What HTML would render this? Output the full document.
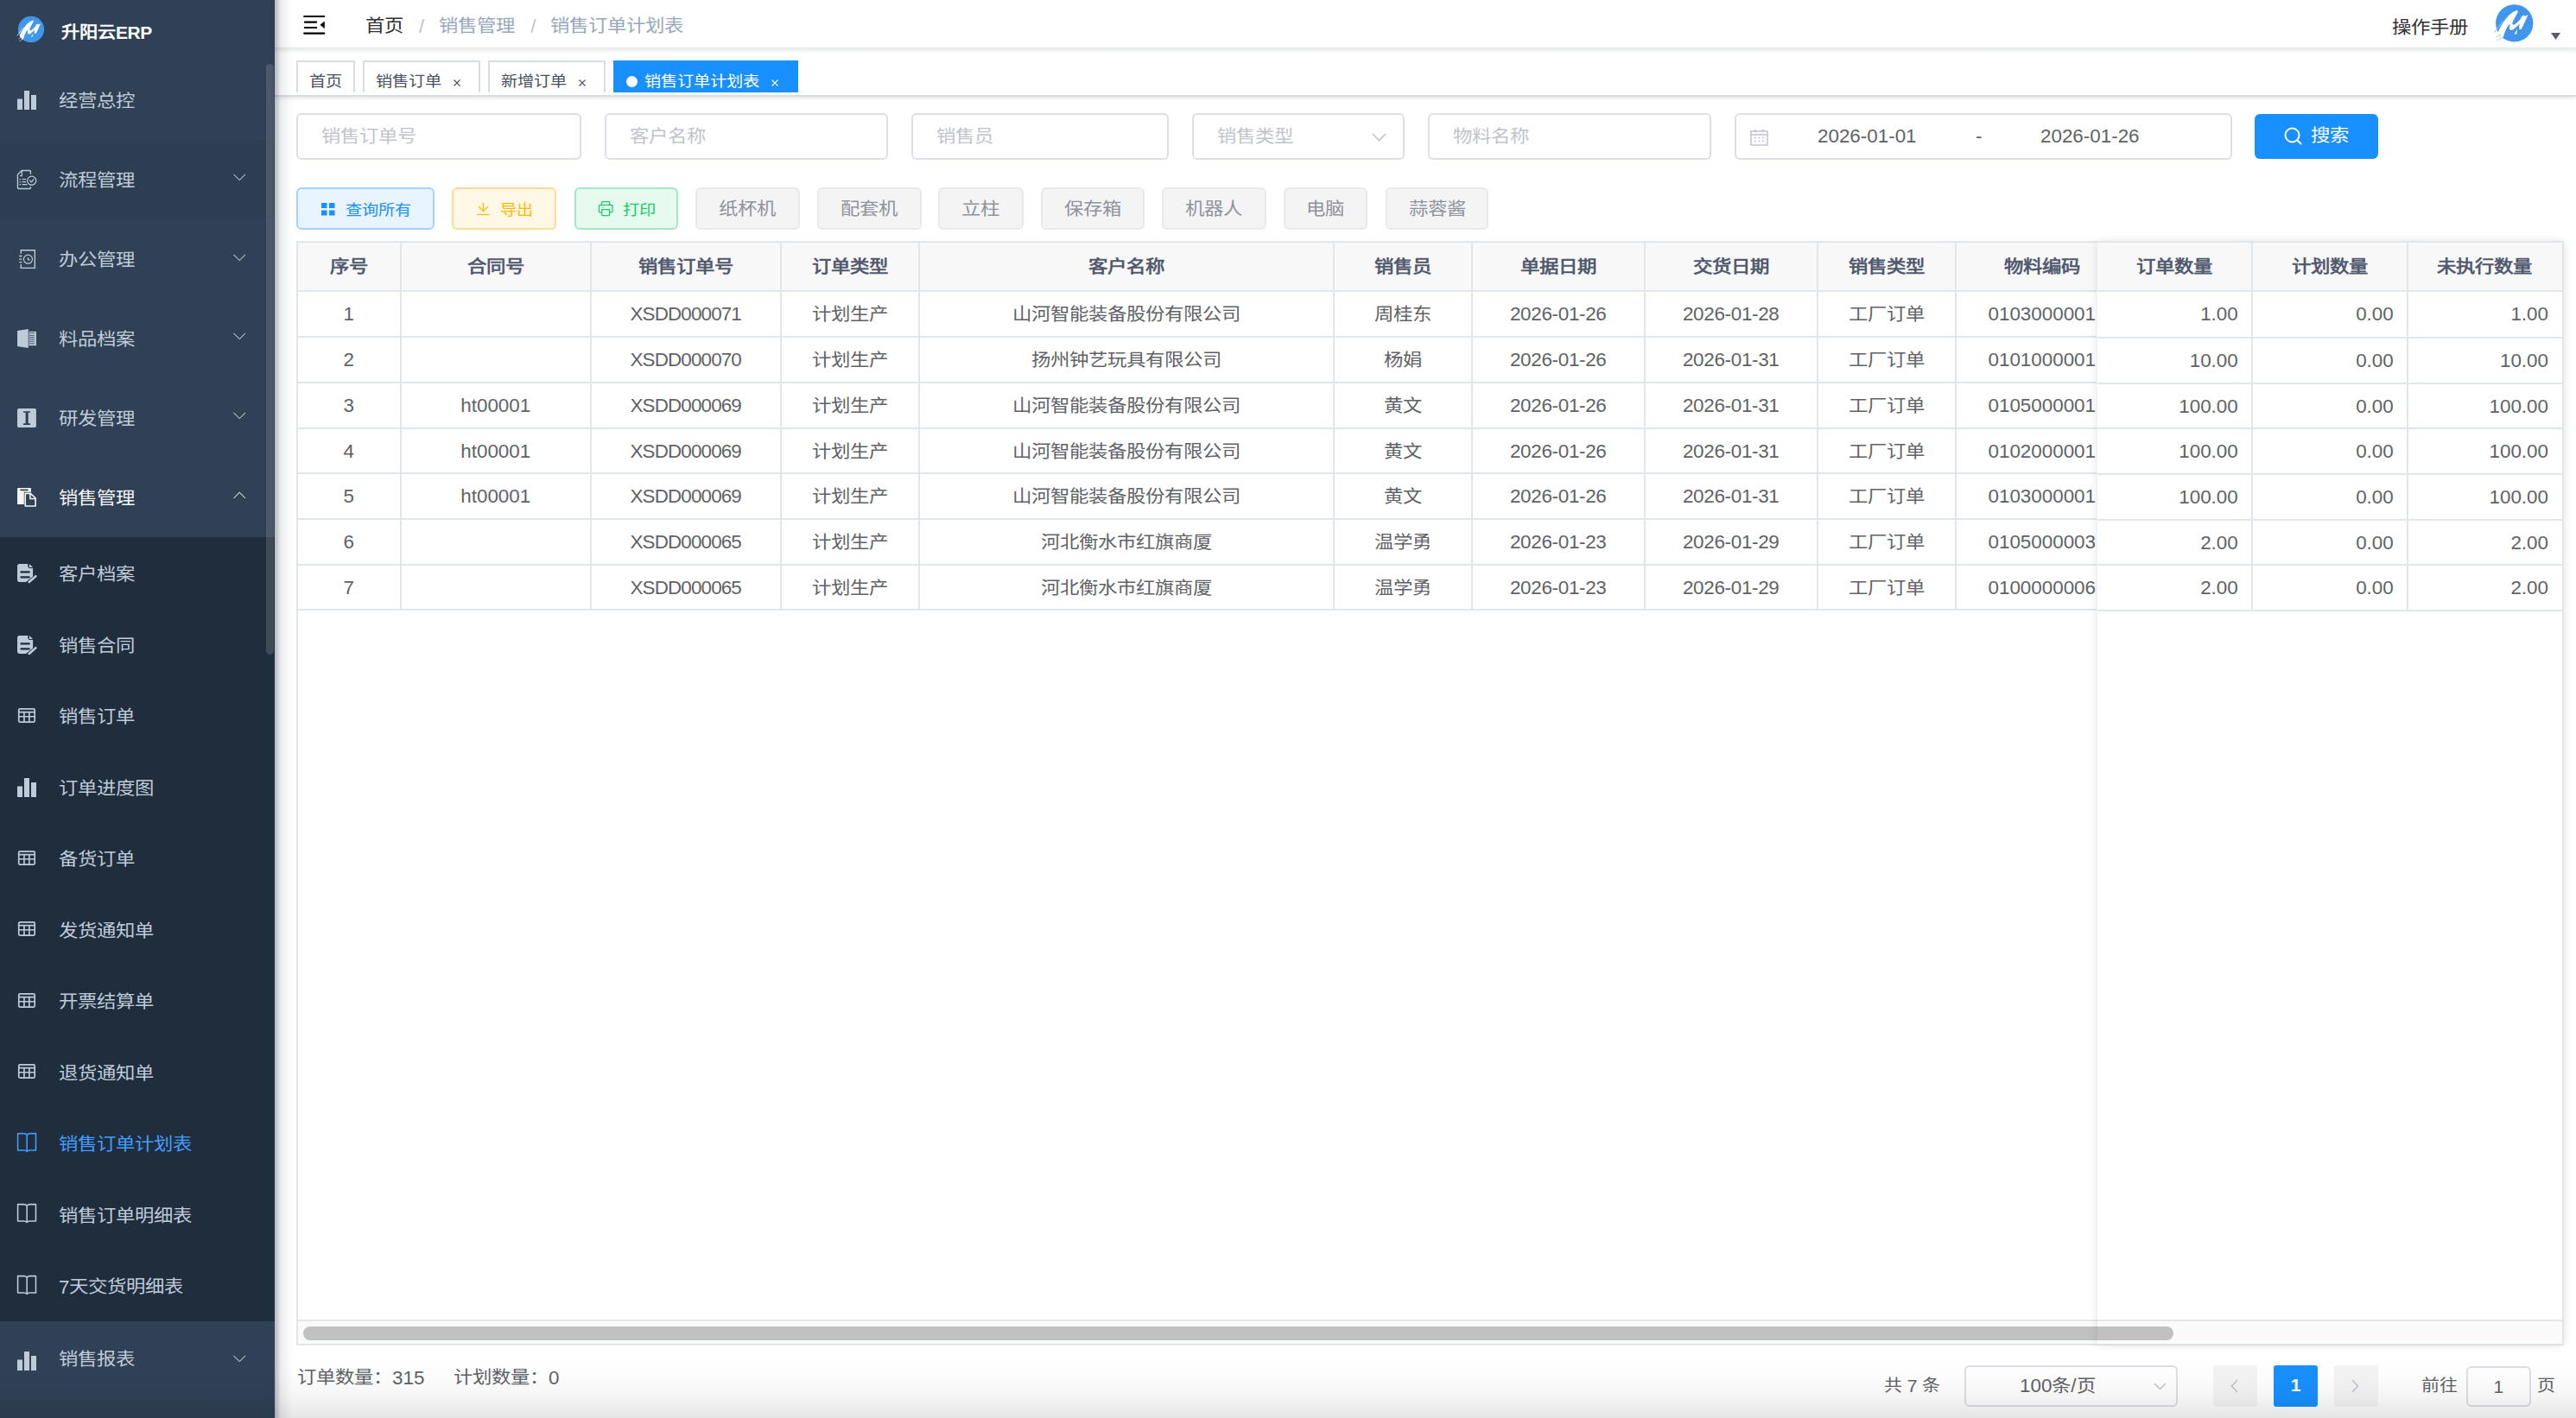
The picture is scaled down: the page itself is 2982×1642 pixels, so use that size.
<!DOCTYPE html>
<html lang="zh-CN"><head><meta charset="utf-8">
<style>
*{box-sizing:border-box;margin:0;padding:0}
html,body{width:2982px;height:1642px;overflow:hidden;background:#fff;font-family:"Liberation Sans",sans-serif;}
.abs{position:absolute}
#side{position:absolute;left:0;top:0;width:318px;height:1642px;background:#304156;overflow:hidden}
.mi{position:absolute;left:0;width:308px;color:#bfcbd9;font-size:22.4px;white-space:nowrap}
.mi .t{position:absolute;left:68px;top:0;line-height:var(--h);height:var(--h)}
.mi .ic{position:absolute;left:20px}
.mi .ch{position:absolute;left:270px;width:14px;height:14px}
#sub{position:absolute;left:0;top:622px;width:318px;height:907.5px;background:#1f2d3d}
#thumb{position:absolute;left:308px;top:74px;width:9px;height:684px;border-radius:5px;background:rgba(144,147,153,.3)}
#main{position:absolute;left:318px;top:0;width:2664px;height:1642px;background:#fff}
#shadow{position:absolute;left:318px;top:0;width:20px;height:1642px;background:linear-gradient(to right,rgba(0,21,41,.30),rgba(0,21,41,.08) 35%,rgba(0,21,41,0))}
#nav{position:absolute;left:318px;top:0;width:2664px;height:55px;background:#fff;box-shadow:0 2px 6px rgba(0,21,41,.12)}
#tags{position:absolute;left:318px;top:55px;width:2664px;height:57px;background:#fff;border-bottom:2px solid #d8dce5;box-shadow:0 2px 5px rgba(0,0,0,.10)}
.tab{position:absolute;top:70px;height:37px;border:2px solid #d8dce5;border-bottom:none;background:#fff}
.tt{position:absolute;top:78.5px;height:32px;line-height:32px;font-size:19.2px;color:#495060;white-space:nowrap}
.inp{position:absolute;top:131px;height:54px;border:2px solid #dcdfe6;border-radius:6px;background:#fff;color:#c0c4cc;font-size:22.4px;line-height:50px;padding-left:27px;white-space:nowrap}
.btn{position:absolute;top:217px;height:48.5px;border:2px solid;border-radius:6px;font-size:22.4px;line-height:45px;text-align:center;white-space:nowrap}
.bt{position:absolute;top:228px;height:32px;line-height:32px;font-size:19.2px;white-space:nowrap}
.gb{background:#f4f4f5;border-color:#e9e9eb;color:#909399}
#tbl{position:absolute;left:343px;top:279px;width:2625px;height:1279px;border:2px solid #dfe6ec;background:#fff;overflow:hidden}
.hd{position:absolute;top:0;height:58px;background:#f8f8f9;border-bottom:2px solid #dfe6ec}
.vl{position:absolute;width:2px;background:#dfe6ec}
.hl{position:absolute;height:2px;background:#dfe6ec}
.th{position:absolute;top:0;height:56px;line-height:56px;text-align:center;font-size:22.4px;font-weight:bold;color:#515a6e;white-space:nowrap}
.td{position:absolute;height:52px;line-height:52px;text-align:center;font-size:22.4px;color:#606266;white-space:nowrap;overflow:hidden}
.cj{display:inline-block;transform:translateY(var(--dy,0px)) scaleY(.9);transform-origin:50% 52%}
.td,.th,.inp,.gb{--dy:1px}
</style></head>
<body>
<div id="main"></div>

<!-- SIDEBAR -->
<div id="side">
  <div id="sub"></div><div class="abs" style="left:0;top:161.5px;width:318px;height:92px;background:rgba(0,0,0,.045)"></div>
  <!-- logo -->
  <svg class="abs" style="left:10px;top:10px" width="190" height="50" viewBox="0 0 2576 678"><g transform="translate(352,325) scale(0.367) translate(-792,-692)"><circle cx="792" cy="692" r="558" fill="#4096ea"/><path d="M300,960 C420,700 620,380 850,310 C900,300 905,360 880,390 C820,500 740,620 730,700 C730,760 790,740 840,700 C930,630 990,560 1010,490 L1070,450 L1110,480 L1200,440 C1120,620 1050,780 1000,870 L940,880 C920,800 940,740 950,700 C880,780 780,880 700,900 C630,900 640,820 660,700 C560,800 500,950 460,1110 L420,1130 L330,1030 Z M880,870 C840,930 800,980 800,1010 C810,1040 850,1030 860,990 Z" fill="#fff"/><path d="M200,960 L450,630" stroke="#fff" stroke-width="30" stroke-linecap="round" opacity="0.85"/><path d="M270,1090 L380,1030 M290,1200 L430,1110" stroke="#fff" stroke-width="26" stroke-linecap="round" opacity="0.8"/></g></svg>
  <div class="abs" style="left:71px;top:21.5px;font-size:21.3px;font-weight:bold;color:#fff;line-height:32px;white-space:nowrap"><span class="cj">升阳云</span><span style="font-size:21px;letter-spacing:-0.5px">ERP</span></div>
  <div id="thumb"></div>
  <div id="menu"><svg class="abs" style="left:20px;top:105px" width="23" height="23" viewBox="0 0 23 23"><rect x="0" y="9.5" width="6" height="12.5" fill="#bfcbd9"/><rect x="8" y="0" width="6" height="22" fill="#bfcbd9"/><rect x="16" y="5" width="6" height="17" fill="#bfcbd9"/></svg><div class="abs" style="left:68px;top:101.5px;height:32px;line-height:32px;font-size:22.4px;color:#bfcbd9;white-space:nowrap"><span class="cj">经营总控</span></div><svg class="abs" style="left:12px;top:190px" width="40" height="40" viewBox="0 0 1418 1418"><path d="M830,420 V300 Q830,265 795,265 H470 L300,430 V975 Q300,1010 335,1010 H795 Q830,1010 830,975 V930" stroke="#bfcbd9" stroke-width="48" fill="none"/><path d="M470,280 V480 H390" stroke="#bfcbd9" stroke-width="45" fill="none"/><path d="M375,625 H430 M480,625 H640 M375,730 H430 M480,730 H640 M375,840 H430 M480,840 H690" stroke="#bfcbd9" stroke-width="45" fill="none"/><circle cx="875" cy="680" r="180" stroke="#bfcbd9" stroke-width="45" fill="none"/><path d="M790,665 L865,740 L960,615" stroke="#bfcbd9" stroke-width="45" fill="none"/></svg><div class="abs" style="left:68px;top:193.5px;height:32px;line-height:32px;font-size:22.4px;color:#bfcbd9;white-space:nowrap"><span class="cj">流程管理</span></div><svg class="abs" style="left:269.5px;top:201px" width="15" height="9" viewBox="0 0 15 9"><path d="M0.5 0.8 L7.25 7.55 L14 0.8" stroke="#bfcbd9" stroke-width="1.05" fill="none" opacity=".9"/></svg><svg class="abs" style="left:12px;top:280.0px" width="40" height="40" viewBox="0 0 1418 1418"><path d="M435,490 V345 H1005 V1075 H435 V925" stroke="#bfcbd9" stroke-width="48" fill="none"/><path d="M360,585 H480 M360,715 H480 M360,835 H480" stroke="#bfcbd9" stroke-width="45"/><circle cx="725" cy="715" r="178" stroke="#bfcbd9" stroke-width="42" fill="none"/><path d="M725,640 V740 H805" stroke="#bfcbd9" stroke-width="42" fill="none"/></svg><div class="abs" style="left:68px;top:286.0px;height:32px;line-height:32px;font-size:22.4px;color:#bfcbd9;white-space:nowrap"><span class="cj">办公管理</span></div><svg class="abs" style="left:269.5px;top:293.5px" width="15" height="9" viewBox="0 0 15 9"><path d="M0.5 0.8 L7.25 7.55 L14 0.8" stroke="#bfcbd9" stroke-width="1.05" fill="none" opacity=".9"/></svg><svg class="abs" style="left:12px;top:372px" width="40" height="40" viewBox="0 0 1418 1418"><path d="M285,390 L735,320 L735,1100 L285,1030 Z" fill="#bfcbd9"/><rect x="760" y="420" width="300" height="580" fill="#bfcbd9"/><path d="M760,480 H990 M760,580 H990 M760,655 H990 M760,830 H990" stroke="#304156" stroke-width="28"/><path d="M760,740 H990 M760,910 H990" stroke="#6d7d92" stroke-width="55"/></svg><div class="abs" style="left:68px;top:377.5px;height:32px;line-height:32px;font-size:22.4px;color:#bfcbd9;white-space:nowrap"><span class="cj">料品档案</span></div><svg class="abs" style="left:269.5px;top:385px" width="15" height="9" viewBox="0 0 15 9"><path d="M0.5 0.8 L7.25 7.55 L14 0.8" stroke="#bfcbd9" stroke-width="1.05" fill="none" opacity=".9"/></svg><svg class="abs" style="left:12px;top:464px" width="40" height="40" viewBox="0 0 1418 1418"><rect x="285" y="320" width="775" height="780" rx="60" fill="#bfcbd9"/><path d="M535,430 H815 V490 H735 V930 H815 V990 H535 V930 H625 V490 H535 Z" fill="#304156"/></svg><div class="abs" style="left:68px;top:469.5px;height:32px;line-height:32px;font-size:22.4px;color:#bfcbd9;white-space:nowrap"><span class="cj">研发管理</span></div><svg class="abs" style="left:269.5px;top:477px" width="15" height="9" viewBox="0 0 15 9"><path d="M0.5 0.8 L7.25 7.55 L14 0.8" stroke="#bfcbd9" stroke-width="1.05" fill="none" opacity=".9"/></svg><svg class="abs" style="left:12px;top:556px" width="40" height="40" viewBox="0 0 1418 1418"><rect x="285" y="320" width="565" height="670" rx="15" fill="#f4f4f5"/><rect x="395" y="375" width="340" height="55" rx="27" fill="#304156"/><path d="M560,490 H860 L1090,700 V1110 H560 Z" fill="#304156"/><path d="M612,545 H825 L1032,735 V1062 H612 Z" stroke="#f4f4f5" stroke-width="58" fill="none" stroke-linejoin="round"/><path d="M812,560 V760 H1020" stroke="#f4f4f5" stroke-width="55" fill="none"/></svg><div class="abs" style="left:68px;top:561.5px;height:32px;line-height:32px;font-size:22.4px;color:#f4f4f5;white-space:nowrap"><span class="cj">销售管理</span></div><svg class="abs" style="left:269.5px;top:568.5px" width="15" height="9" viewBox="0 0 15 9"><path d="M0.5 8 L7.25 1.25 L14 8" stroke="#f4f4f5" stroke-width="1.05" fill="none" opacity=".9"/></svg><svg class="abs" style="left:12px;top:644.0px" width="40" height="40" viewBox="0 0 1418 1418"><path d="M370,320 H720 V400 Q720,500 820,500 H925 V830 L640,1060 H380 Q285,1060 285,965 V415 Q285,320 370,320 Z" fill="#bfcbd9"/><path d="M775,320 L925,460 H790 Q775,460 775,445 Z" fill="#bfcbd9"/><path d="M440,655 H770 M440,860 H770" stroke="#1f2d3d" stroke-width="80" stroke-linecap="round"/><path d="M650,1050 L560,1040" stroke="#1f2d3d" stroke-width="0"/><path d="M770,1060 L960,895" stroke="#bfcbd9" stroke-width="95" stroke-linecap="round"/><path d="M1010,850 L1040,825" stroke="#bfcbd9" stroke-width="95" stroke-linecap="round"/></svg><div class="abs" style="left:68px;top:650.0px;height:32px;line-height:32px;font-size:22.4px;color:#bfcbd9;white-space:nowrap"><span class="cj">客户档案</span></div><svg class="abs" style="left:12px;top:726.5px" width="40" height="40" viewBox="0 0 1418 1418"><path d="M370,320 H720 V400 Q720,500 820,500 H925 V830 L640,1060 H380 Q285,1060 285,965 V415 Q285,320 370,320 Z" fill="#bfcbd9"/><path d="M775,320 L925,460 H790 Q775,460 775,445 Z" fill="#bfcbd9"/><path d="M440,655 H770 M440,860 H770" stroke="#1f2d3d" stroke-width="80" stroke-linecap="round"/><path d="M650,1050 L560,1040" stroke="#1f2d3d" stroke-width="0"/><path d="M770,1060 L960,895" stroke="#bfcbd9" stroke-width="95" stroke-linecap="round"/><path d="M1010,850 L1040,825" stroke="#bfcbd9" stroke-width="95" stroke-linecap="round"/></svg><div class="abs" style="left:68px;top:732.5px;height:32px;line-height:32px;font-size:22.4px;color:#bfcbd9;white-space:nowrap"><span class="cj">销售合同</span></div><svg class="abs" style="left:12px;top:809.5px" width="40" height="40" viewBox="0 0 1418 1418"><rect x="345" y="385" width="655" height="540" rx="45" stroke="#bfcbd9" stroke-width="60" fill="none"/><path d="M345,520 H1000 M345,700 H1000 M565,520 V925 M775,520 V925" stroke="#bfcbd9" stroke-width="58"/></svg><div class="abs" style="left:68px;top:815.0px;height:32px;line-height:32px;font-size:22.4px;color:#bfcbd9;white-space:nowrap"><span class="cj">销售订单</span></div><svg class="abs" style="left:20px;top:901.0px" width="23" height="23" viewBox="0 0 23 23"><rect x="0" y="9.5" width="6" height="12.5" fill="#bfcbd9"/><rect x="8" y="0" width="6" height="22" fill="#bfcbd9"/><rect x="16" y="5" width="6" height="17" fill="#bfcbd9"/></svg><div class="abs" style="left:68px;top:897.5px;height:32px;line-height:32px;font-size:22.4px;color:#bfcbd9;white-space:nowrap"><span class="cj">订单进度图</span></div><svg class="abs" style="left:12px;top:974.5px" width="40" height="40" viewBox="0 0 1418 1418"><rect x="345" y="385" width="655" height="540" rx="45" stroke="#bfcbd9" stroke-width="60" fill="none"/><path d="M345,520 H1000 M345,700 H1000 M565,520 V925 M775,520 V925" stroke="#bfcbd9" stroke-width="58"/></svg><div class="abs" style="left:68px;top:980.0px;height:32px;line-height:32px;font-size:22.4px;color:#bfcbd9;white-space:nowrap"><span class="cj">备货订单</span></div><svg class="abs" style="left:12px;top:1057.0px" width="40" height="40" viewBox="0 0 1418 1418"><rect x="345" y="385" width="655" height="540" rx="45" stroke="#bfcbd9" stroke-width="60" fill="none"/><path d="M345,520 H1000 M345,700 H1000 M565,520 V925 M775,520 V925" stroke="#bfcbd9" stroke-width="58"/></svg><div class="abs" style="left:68px;top:1062.5px;height:32px;line-height:32px;font-size:22.4px;color:#bfcbd9;white-space:nowrap"><span class="cj">发货通知单</span></div><svg class="abs" style="left:12px;top:1139.5px" width="40" height="40" viewBox="0 0 1418 1418"><rect x="345" y="385" width="655" height="540" rx="45" stroke="#bfcbd9" stroke-width="60" fill="none"/><path d="M345,520 H1000 M345,700 H1000 M565,520 V925 M775,520 V925" stroke="#bfcbd9" stroke-width="58"/></svg><div class="abs" style="left:68px;top:1145.0px;height:32px;line-height:32px;font-size:22.4px;color:#bfcbd9;white-space:nowrap"><span class="cj">开票结算单</span></div><svg class="abs" style="left:12px;top:1222.0px" width="40" height="40" viewBox="0 0 1418 1418"><rect x="345" y="385" width="655" height="540" rx="45" stroke="#bfcbd9" stroke-width="60" fill="none"/><path d="M345,520 H1000 M345,700 H1000 M565,520 V925 M775,520 V925" stroke="#bfcbd9" stroke-width="58"/></svg><div class="abs" style="left:68px;top:1227.5px;height:32px;line-height:32px;font-size:22.4px;color:#bfcbd9;white-space:nowrap"><span class="cj">退货通知单</span></div><svg class="abs" style="left:12px;top:1304.5px" width="40" height="40" viewBox="0 0 1418 1418"><path d="M305,270 H560 Q640,270 680,330 Q720,270 800,270 H1045 V960 H790 Q720,960 680,1010 Q640,960 560,960 H305 Z" stroke="#409eff" stroke-width="55" fill="none" stroke-linejoin="round"/><path d="M680,330 V1000" stroke="#409eff" stroke-width="55"/></svg><div class="abs" style="left:68px;top:1310.0px;height:32px;line-height:32px;font-size:22.4px;color:#409eff;white-space:nowrap"><span class="cj">销售订单计划表</span></div><svg class="abs" style="left:12px;top:1387.0px" width="40" height="40" viewBox="0 0 1418 1418"><path d="M305,270 H560 Q640,270 680,330 Q720,270 800,270 H1045 V960 H790 Q720,960 680,1010 Q640,960 560,960 H305 Z" stroke="#bfcbd9" stroke-width="55" fill="none" stroke-linejoin="round"/><path d="M680,330 V1000" stroke="#bfcbd9" stroke-width="55"/></svg><div class="abs" style="left:68px;top:1392.5px;height:32px;line-height:32px;font-size:22.4px;color:#bfcbd9;white-space:nowrap"><span class="cj">销售订单明细表</span></div><svg class="abs" style="left:12px;top:1469.5px" width="40" height="40" viewBox="0 0 1418 1418"><path d="M305,270 H560 Q640,270 680,330 Q720,270 800,270 H1045 V960 H790 Q720,960 680,1010 Q640,960 560,960 H305 Z" stroke="#bfcbd9" stroke-width="55" fill="none" stroke-linejoin="round"/><path d="M680,330 V1000" stroke="#bfcbd9" stroke-width="55"/></svg><div class="abs" style="left:68px;top:1475.0px;height:32px;line-height:32px;font-size:22.4px;color:#bfcbd9;white-space:nowrap">7<span class="cj">天交货明细表</span></div><svg class="abs" style="left:20px;top:1565px" width="23" height="23" viewBox="0 0 23 23"><rect x="0" y="9.5" width="6" height="12.5" fill="#bfcbd9"/><rect x="8" y="0" width="6" height="22" fill="#bfcbd9"/><rect x="16" y="5" width="6" height="17" fill="#bfcbd9"/></svg><div class="abs" style="left:68px;top:1558.8px;height:32px;line-height:32px;font-size:22.4px;color:#bfcbd9;white-space:nowrap"><span class="cj">销售报表</span></div><svg class="abs" style="left:269.5px;top:1568.5px" width="15" height="9" viewBox="0 0 15 9"><path d="M0.5 0.8 L7.25 7.55 L14 0.8" stroke="#bfcbd9" stroke-width="1.05" fill="none" opacity=".9"/></svg></div>
</div>

<!-- NAVBAR -->
<div id="nav">
  <svg class="abs" style="left:27px;top:12px" width="40" height="34" viewBox="0 0 1668 1418"><path d="M300,292 H1262 M330,567 H882 M330,835 H882 M300,1110 H1262" stroke="#000" stroke-width="92" stroke-linecap="round"/><path d="M1278,540 L1075,700 L1278,865 Z" fill="#000" stroke="#000" stroke-width="20" stroke-linejoin="round"/></svg>
  <div class="abs" style="left:105px;top:15px;font-size:22.4px;line-height:32px;white-space:nowrap;color:#303133"><span class="cj">首页</span><span style="color:#c0c4cc;margin:0 17px 0 18px">/</span><span style="color:#97a8be"><span class="cj">销售管理</span></span><span style="color:#c0c4cc;margin:0 17px 0 18px">/</span><span style="color:#97a8be"><span class="cj">销售订单计划表</span></span></div>
  <div class="abs" style="left:2451px;top:17px;font-size:22.4px;line-height:32px;color:#303133;white-space:nowrap"><span class="cj">操作手册</span></div>
  <svg class="abs" style="left:2562px;top:0px" width="100" height="55" viewBox="0 0 2576 1417"><circle cx="792" cy="692" r="558" fill="#4096ea"/><path d="M300,960 C420,700 620,380 850,310 C900,300 905,360 880,390 C820,500 740,620 730,700 C730,760 790,740 840,700 C930,630 990,560 1010,490 L1070,450 L1110,480 L1200,440 C1120,620 1050,780 1000,870 L940,880 C920,800 940,740 950,700 C880,780 780,880 700,900 C630,900 640,820 660,700 C560,800 500,950 460,1110 L420,1130 L330,1030 Z M880,870 C840,930 800,980 800,1010 C810,1040 850,1030 860,990 Z" fill="#fff"/><path d="M200,960 L450,630" stroke="#8fc3f3" stroke-width="30" stroke-linecap="round" stroke-dasharray="40 25" opacity="0.9"/><path d="M270,1090 L380,1030 M290,1200 L430,1110" stroke="#8fc3f3" stroke-width="26" stroke-linecap="round" stroke-dasharray="30 30" opacity="0.9"/></svg>
  <svg class="abs" style="left:2635px;top:38px" width="12" height="9" viewBox="0 0 12 9"><path d="M0 0 L11 0 L5.5 8 Z" fill="#5a5e66"/></svg>
</div>

<!-- TAGS -->
<div id="tags"></div>
<div class="tab" style="left:343px;width:67.5px"></div>
<div class="tab" style="left:420px;width:135.5px"></div>
<div class="tab" style="left:565px;width:135.7px"></div>
<div class="tab" style="left:710px;width:214px;background:#1890ff;border-color:#1890ff"></div>
<div class="tt" style="left:358px"><span class="cj">首页</span></div>
<div class="tt" style="left:435px"><span class="cj">销售订单</span></div><svg class="abs" style="left:525px;top:92px" width="8" height="8" viewBox="0 0 8 8"><path d="M0.5 0.5 L7.5 7.5 M7.5 0.5 L0.5 7.5" stroke="#495060" stroke-width="1.1"/></svg>
<div class="tt" style="left:580px"><span class="cj">新增订单</span></div><svg class="abs" style="left:670px;top:92px" width="8" height="8" viewBox="0 0 8 8"><path d="M0.5 0.5 L7.5 7.5 M7.5 0.5 L0.5 7.5" stroke="#495060" stroke-width="1.1"/></svg>
<span class="abs" style="left:725px;top:87.5px;width:13px;height:13px;border-radius:50%;background:#fff"></span>
<div class="tt" style="left:745.5px;color:#fff"><span class="cj">销售订单计划表</span></div><svg class="abs" style="left:892.5px;top:92px" width="8" height="8" viewBox="0 0 8 8"><path d="M0.5 0.5 L7.5 7.5 M7.5 0.5 L0.5 7.5" stroke="#fff" stroke-width="1.1"/></svg>
<div id="content"><div class="inp" style="left:343px;width:329.5px"><span class="cj">销售订单号</span></div><div class="inp" style="left:699.5px;width:328.0px"><span class="cj">客户名称</span></div><div class="inp" style="left:1054.5px;width:298.75px"><span class="cj">销售员</span></div><div class="inp" style="left:1379.5px;width:246.75px"><span class="cj">销售类型</span></div><div class="inp" style="left:1652.5px;width:328.75px"><span class="cj">物料名称</span></div><svg class="abs" style="left:1588px;top:154px" width="17" height="10" viewBox="0 0 17 10"><path d="M1 1 L8.5 8.5 L16 1" stroke="#c0c4cc" stroke-width="1.6" fill="none"/></svg><div class="inp" style="left:2007.5px;width:576px;padding:0"></div><svg class="abs" style="left:2026px;top:149px" width="21" height="20" viewBox="0 0 21 20"><rect x="1" y="3" width="19" height="16" stroke="#c0c4cc" stroke-width="1.5" fill="none"/><path d="M1 7 H20 M6 0.5 V4 M15 0.5 V4" stroke="#c0c4cc" stroke-width="1.5"/><path d="M5 10.5 H7 M9.5 10.5 H11.5 M14 10.5 H16 M5 14.5 H7 M9.5 14.5 H11.5 M14 14.5 H16" stroke="#c0c4cc" stroke-width="1.3"/></svg><div class="abs" style="left:2104px;top:142px;font-size:22.4px;line-height:32px;color:#606266;white-space:nowrap">2026-01-01</div><div class="abs" style="left:2287px;top:142px;font-size:22.4px;line-height:32px;color:#606266">-</div><div class="abs" style="left:2362px;top:142px;font-size:22.4px;line-height:32px;color:#606266;white-space:nowrap">2026-01-26</div><div class="abs" style="left:2610px;top:132px;width:143px;height:52px;border-radius:6px;background:#1890ff"></div><svg class="abs" style="left:2644px;top:147px" width="22" height="22" viewBox="0 0 22 22"><circle cx="9.5" cy="9.5" r="8" stroke="#fff" stroke-width="2" fill="none"/><path d="M15.5 15.5 L19.5 19.5" stroke="#fff" stroke-width="2" stroke-linecap="round"/></svg><div class="abs" style="left:2675px;top:142px;font-size:22.4px;line-height:32px;color:#fff;white-space:nowrap"><span class="cj">搜索</span></div><div class="btn" style="left:343px;width:160px;background:#e8f4ff;border-color:#a3d3ff"></div><div class="bt" style="left:399.5px;color:#1890ff"><span class="cj">查询所有</span></div><svg class="abs" style="left:372px;top:235px" width="16" height="15" viewBox="0 0 16 15"><rect x="0" y="0" width="6.5" height="6" fill="#1890ff"/><rect x="9" y="0" width="6.5" height="6" fill="#1890ff"/><rect x="0" y="8.5" width="6.5" height="6" fill="#1890ff"/><rect x="9" y="8.5" width="6.5" height="6" fill="#1890ff"/></svg><div class="btn" style="left:523px;width:121px;background:#fff8e6;border-color:#ffdb93"></div><div class="bt" style="left:578.5px;color:#ffba00"><span class="cj">导出</span></div><svg class="abs" style="left:545px;top:228px" width="30" height="28" viewBox="0 0 1519 1418"><path d="M735,360 V820 M475,580 L735,840 L990,580 M395,1035 H1070" stroke="#ffba00" stroke-width="66" stroke-linecap="round" stroke-linejoin="round" fill="none"/></svg><div class="btn" style="left:664.5px;width:120px;background:#e7faf0;border-color:#a0e9c2"></div><div class="bt" style="left:720.5px;color:#13ce66"><span class="cj">打印</span></div><svg class="abs" style="left:686px;top:228px" width="30" height="28" viewBox="0 0 1519 1418"><g stroke="#13ce66" stroke-width="62" fill="none"><path d="M535,470 V330 Q535,290 575,290 H960 Q1000,290 1000,330 V470"/><path d="M525,910 H430 Q375,910 375,855 V535 Q375,480 430,480 H1110 Q1165,480 1165,535 V855 Q1165,910 1110,910 H1000"/><path d="M540,740 H990 V1050 Q990,1090 950,1090 H580 Q540,1090 540,1050 Z"/></g><path d="M520,610 H700" stroke="#13ce66" stroke-width="45" opacity=".45"/></svg><div class="btn gb" style="left:805px;width:120.5px"><span class="cj">纸杯机</span></div><div class="btn gb" style="left:945.5px;width:121.0px"><span class="cj">配套机</span></div><div class="btn gb" style="left:1086.25px;width:98.25px"><span class="cj">立柱</span></div><div class="btn gb" style="left:1204.5px;width:120.0px"><span class="cj">保存箱</span></div><div class="btn gb" style="left:1344.5px;width:121.0px"><span class="cj">机器人</span></div><div class="btn gb" style="left:1485.5px;width:97.75px"><span class="cj">电脑</span></div><div class="btn gb" style="left:1603.75px;width:119.5px"><span class="cj">蒜蓉酱</span></div><div class="abs" style="left:343px;top:279px;width:2625px;height:1279px;border:2px solid #dfe6ec;background:#fff"></div><div class="abs" style="left:345px;top:281px;width:2621px;height:56px;background:#f8f8f9"></div><div class="hl" style="left:345px;top:336px;width:2082px"></div><div class="hl" style="left:345px;top:389px;width:2082px"></div><div class="hl" style="left:345px;top:442px;width:2082px"></div><div class="hl" style="left:345px;top:494.5px;width:2082px"></div><div class="hl" style="left:345px;top:547px;width:2082px"></div><div class="hl" style="left:345px;top:600px;width:2082px"></div><div class="hl" style="left:345px;top:652.5px;width:2082px"></div><div class="hl" style="left:345px;top:705px;width:2082px"></div><div class="vl" style="left:462.75px;top:281px;height:426px"></div><div class="vl" style="left:682.75px;top:281px;height:426px"></div><div class="vl" style="left:902.75px;top:281px;height:426px"></div><div class="vl" style="left:1062.75px;top:281px;height:426px"></div><div class="vl" style="left:1542.75px;top:281px;height:426px"></div><div class="vl" style="left:1702.75px;top:281px;height:426px"></div><div class="vl" style="left:1902.75px;top:281px;height:426px"></div><div class="vl" style="left:2102.75px;top:281px;height:426px"></div><div class="vl" style="left:2262.75px;top:281px;height:426px"></div><div class="th" style="left:343.75px;width:120.0px;top:281px"><span class="cj">序号</span></div><div class="th" style="left:463.75px;width:220.0px;top:281px"><span class="cj">合同号</span></div><div class="th" style="left:683.75px;width:220.0px;top:281px"><span class="cj">销售订单号</span></div><div class="th" style="left:903.75px;width:160.0px;top:281px"><span class="cj">订单类型</span></div><div class="th" style="left:1063.75px;width:480.0px;top:281px"><span class="cj">客户名称</span></div><div class="th" style="left:1543.75px;width:160.0px;top:281px"><span class="cj">销售员</span></div><div class="th" style="left:1703.75px;width:200.0px;top:281px"><span class="cj">单据日期</span></div><div class="th" style="left:1903.75px;width:200.0px;top:281px"><span class="cj">交货日期</span></div><div class="th" style="left:2103.75px;width:160.0px;top:281px"><span class="cj">销售类型</span></div><div class="th" style="left:2263.75px;width:200.0px;top:281px"><span class="cj">物料编码</span></div><div class="td" style="left:343.75px;width:120.0px;top:338px;">1</div><div class="td" style="left:683.75px;width:220.0px;top:338px;letter-spacing:-0.85px;">XSDD000071</div><div class="td" style="left:903.75px;width:160.0px;top:338px;"><span class="cj">计划生产</span></div><div class="td" style="left:1063.75px;width:480.0px;top:338px;"><span class="cj">山河智能装备股份有限公司</span></div><div class="td" style="left:1543.75px;width:160.0px;top:338px;"><span class="cj">周桂东</span></div><div class="td" style="left:1703.75px;width:200.0px;top:338px;letter-spacing:-0.3px;">2026-01-26</div><div class="td" style="left:1903.75px;width:200.0px;top:338px;letter-spacing:-0.3px;">2026-01-28</div><div class="td" style="left:2103.75px;width:160.0px;top:338px;"><span class="cj">工厂订单</span></div><div class="td" style="left:2263.75px;width:200.0px;top:338px;">0103000001</div><div class="td" style="left:343.75px;width:120.0px;top:391px;">2</div><div class="td" style="left:683.75px;width:220.0px;top:391px;letter-spacing:-0.85px;">XSDD000070</div><div class="td" style="left:903.75px;width:160.0px;top:391px;"><span class="cj">计划生产</span></div><div class="td" style="left:1063.75px;width:480.0px;top:391px;"><span class="cj">扬州钟艺玩具有限公司</span></div><div class="td" style="left:1543.75px;width:160.0px;top:391px;"><span class="cj">杨娟</span></div><div class="td" style="left:1703.75px;width:200.0px;top:391px;letter-spacing:-0.3px;">2026-01-26</div><div class="td" style="left:1903.75px;width:200.0px;top:391px;letter-spacing:-0.3px;">2026-01-31</div><div class="td" style="left:2103.75px;width:160.0px;top:391px;"><span class="cj">工厂订单</span></div><div class="td" style="left:2263.75px;width:200.0px;top:391px;">0101000001</div><div class="td" style="left:343.75px;width:120.0px;top:444px;">3</div><div class="td" style="left:463.75px;width:220.0px;top:444px;">ht00001</div><div class="td" style="left:683.75px;width:220.0px;top:444px;letter-spacing:-0.85px;">XSDD000069</div><div class="td" style="left:903.75px;width:160.0px;top:444px;"><span class="cj">计划生产</span></div><div class="td" style="left:1063.75px;width:480.0px;top:444px;"><span class="cj">山河智能装备股份有限公司</span></div><div class="td" style="left:1543.75px;width:160.0px;top:444px;"><span class="cj">黄文</span></div><div class="td" style="left:1703.75px;width:200.0px;top:444px;letter-spacing:-0.3px;">2026-01-26</div><div class="td" style="left:1903.75px;width:200.0px;top:444px;letter-spacing:-0.3px;">2026-01-31</div><div class="td" style="left:2103.75px;width:160.0px;top:444px;"><span class="cj">工厂订单</span></div><div class="td" style="left:2263.75px;width:200.0px;top:444px;">0105000001</div><div class="td" style="left:343.75px;width:120.0px;top:496.5px;">4</div><div class="td" style="left:463.75px;width:220.0px;top:496.5px;">ht00001</div><div class="td" style="left:683.75px;width:220.0px;top:496.5px;letter-spacing:-0.85px;">XSDD000069</div><div class="td" style="left:903.75px;width:160.0px;top:496.5px;"><span class="cj">计划生产</span></div><div class="td" style="left:1063.75px;width:480.0px;top:496.5px;"><span class="cj">山河智能装备股份有限公司</span></div><div class="td" style="left:1543.75px;width:160.0px;top:496.5px;"><span class="cj">黄文</span></div><div class="td" style="left:1703.75px;width:200.0px;top:496.5px;letter-spacing:-0.3px;">2026-01-26</div><div class="td" style="left:1903.75px;width:200.0px;top:496.5px;letter-spacing:-0.3px;">2026-01-31</div><div class="td" style="left:2103.75px;width:160.0px;top:496.5px;"><span class="cj">工厂订单</span></div><div class="td" style="left:2263.75px;width:200.0px;top:496.5px;">0102000001</div><div class="td" style="left:343.75px;width:120.0px;top:549px;">5</div><div class="td" style="left:463.75px;width:220.0px;top:549px;">ht00001</div><div class="td" style="left:683.75px;width:220.0px;top:549px;letter-spacing:-0.85px;">XSDD000069</div><div class="td" style="left:903.75px;width:160.0px;top:549px;"><span class="cj">计划生产</span></div><div class="td" style="left:1063.75px;width:480.0px;top:549px;"><span class="cj">山河智能装备股份有限公司</span></div><div class="td" style="left:1543.75px;width:160.0px;top:549px;"><span class="cj">黄文</span></div><div class="td" style="left:1703.75px;width:200.0px;top:549px;letter-spacing:-0.3px;">2026-01-26</div><div class="td" style="left:1903.75px;width:200.0px;top:549px;letter-spacing:-0.3px;">2026-01-31</div><div class="td" style="left:2103.75px;width:160.0px;top:549px;"><span class="cj">工厂订单</span></div><div class="td" style="left:2263.75px;width:200.0px;top:549px;">0103000001</div><div class="td" style="left:343.75px;width:120.0px;top:602px;">6</div><div class="td" style="left:683.75px;width:220.0px;top:602px;letter-spacing:-0.85px;">XSDD000065</div><div class="td" style="left:903.75px;width:160.0px;top:602px;"><span class="cj">计划生产</span></div><div class="td" style="left:1063.75px;width:480.0px;top:602px;"><span class="cj">河北衡水市红旗商厦</span></div><div class="td" style="left:1543.75px;width:160.0px;top:602px;"><span class="cj">温学勇</span></div><div class="td" style="left:1703.75px;width:200.0px;top:602px;letter-spacing:-0.3px;">2026-01-23</div><div class="td" style="left:1903.75px;width:200.0px;top:602px;letter-spacing:-0.3px;">2026-01-29</div><div class="td" style="left:2103.75px;width:160.0px;top:602px;"><span class="cj">工厂订单</span></div><div class="td" style="left:2263.75px;width:200.0px;top:602px;">0105000003</div><div class="td" style="left:343.75px;width:120.0px;top:654.5px;">7</div><div class="td" style="left:683.75px;width:220.0px;top:654.5px;letter-spacing:-0.85px;">XSDD000065</div><div class="td" style="left:903.75px;width:160.0px;top:654.5px;"><span class="cj">计划生产</span></div><div class="td" style="left:1063.75px;width:480.0px;top:654.5px;"><span class="cj">河北衡水市红旗商厦</span></div><div class="td" style="left:1543.75px;width:160.0px;top:654.5px;"><span class="cj">温学勇</span></div><div class="td" style="left:1703.75px;width:200.0px;top:654.5px;letter-spacing:-0.3px;">2026-01-23</div><div class="td" style="left:1903.75px;width:200.0px;top:654.5px;letter-spacing:-0.3px;">2026-01-29</div><div class="td" style="left:2103.75px;width:160.0px;top:654.5px;"><span class="cj">工厂订单</span></div><div class="td" style="left:2263.75px;width:200.0px;top:654.5px;">0100000006</div><div class="abs" style="left:345px;top:1528px;width:2621px;height:28px;background:#fafafa;border-top:2px solid #e6e6e6"></div><div class="abs" style="left:351px;top:1536px;width:2165px;height:16px;border-radius:8px;background:#c1c1c1"></div><div class="abs" style="left:2427.5px;top:280px;width:540.5px;height:1277px;box-shadow:0 0 10px rgba(0,0,0,.12)"></div><div class="abs" style="left:2427.5px;top:280px;width:538.5px;height:1248px;background:#fff"></div><div class="abs" style="left:2427.5px;top:281px;width:538.5px;height:56px;background:#f8f8f9"></div><div class="hl" style="left:2427.5px;top:279px;width:540.5px"></div><div class="hl" style="left:2427.5px;top:336px;width:538.5px"></div><div class="hl" style="left:2427.5px;top:389.75px;width:538.5px"></div><div class="hl" style="left:2427.5px;top:442.5px;width:538.5px"></div><div class="hl" style="left:2427.5px;top:495px;width:538.5px"></div><div class="hl" style="left:2427.5px;top:547.75px;width:538.5px"></div><div class="hl" style="left:2427.5px;top:600.5px;width:538.5px"></div><div class="hl" style="left:2427.5px;top:653px;width:538.5px"></div><div class="hl" style="left:2427.5px;top:706px;width:538.5px"></div><div class="vl" style="left:2605.75px;top:281px;height:427px"></div><div class="vl" style="left:2785.75px;top:281px;height:427px"></div><div class="vl" style="left:2966px;top:279px;height:1279px"></div><div class="th" style="left:2427.5px;width:179.25px;top:281px"><span class="cj">订单数量</span></div><div class="th" style="left:2606.75px;width:180.0px;top:281px"><span class="cj">计划数量</span></div><div class="th" style="left:2786.75px;width:179.25px;top:281px"><span class="cj">未执行数量</span></div><div class="td" style="left:2427.5px;width:163.25px;top:338px;text-align:right">1.00</div><div class="td" style="left:2606.75px;width:164.0px;top:338px;text-align:right">0.00</div><div class="td" style="left:2786.75px;width:163.25px;top:338px;text-align:right">1.00</div><div class="td" style="left:2427.5px;width:163.25px;top:391.75px;text-align:right">10.00</div><div class="td" style="left:2606.75px;width:164.0px;top:391.75px;text-align:right">0.00</div><div class="td" style="left:2786.75px;width:163.25px;top:391.75px;text-align:right">10.00</div><div class="td" style="left:2427.5px;width:163.25px;top:444.5px;text-align:right">100.00</div><div class="td" style="left:2606.75px;width:164.0px;top:444.5px;text-align:right">0.00</div><div class="td" style="left:2786.75px;width:163.25px;top:444.5px;text-align:right">100.00</div><div class="td" style="left:2427.5px;width:163.25px;top:497px;text-align:right">100.00</div><div class="td" style="left:2606.75px;width:164.0px;top:497px;text-align:right">0.00</div><div class="td" style="left:2786.75px;width:163.25px;top:497px;text-align:right">100.00</div><div class="td" style="left:2427.5px;width:163.25px;top:549.75px;text-align:right">100.00</div><div class="td" style="left:2606.75px;width:164.0px;top:549.75px;text-align:right">0.00</div><div class="td" style="left:2786.75px;width:163.25px;top:549.75px;text-align:right">100.00</div><div class="td" style="left:2427.5px;width:163.25px;top:602.5px;text-align:right">2.00</div><div class="td" style="left:2606.75px;width:164.0px;top:602.5px;text-align:right">0.00</div><div class="td" style="left:2786.75px;width:163.25px;top:602.5px;text-align:right">2.00</div><div class="td" style="left:2427.5px;width:163.25px;top:655px;text-align:right">2.00</div><div class="td" style="left:2606.75px;width:164.0px;top:655px;text-align:right">0.00</div><div class="td" style="left:2786.75px;width:163.25px;top:655px;text-align:right">2.00</div><div class="abs" style="left:344px;top:1580px;font-size:22.4px;line-height:32px;color:#606266;white-space:nowrap"><span class="cj">订单数量：</span>315</div><div class="abs" style="left:525px;top:1580px;font-size:22.4px;line-height:32px;color:#606266;white-space:nowrap"><span class="cj">计划数量：</span>0</div><div class="abs" style="left:2181px;top:1589px;font-size:21px;line-height:32px;color:#606266;white-space:nowrap"><span class="cj">共</span> 7 <span class="cj">条</span></div><div class="inp" style="left:2274px;top:1581px;width:246.5px;height:47.5px;color:#606266;line-height:43px;padding-left:62px">100<span class="cj">条</span>/<span class="cj">页</span></div><svg class="abs" style="left:2493px;top:1601px" width="15" height="9" viewBox="0 0 15 9"><path d="M1 1 L7.5 7.5 L14 1" stroke="#c0c4cc" stroke-width="1.5" fill="none"/></svg><div class="abs" style="left:2562px;top:1581px;width:51px;height:47.5px;background:#f4f4f5;border-radius:3px"></div><svg class="abs" style="left:2582px;top:1597px" width="9" height="16" viewBox="0 0 9 16"><path d="M8 1 L1.5 8 L8 15" stroke="#c0c4cc" stroke-width="1.6" fill="none"/></svg><div class="abs" style="left:2632px;top:1581px;width:51px;height:47.5px;background:#1890ff;border-radius:3px;color:#fff;font-weight:bold;font-size:21px;line-height:46px;text-align:center">1</div><div class="abs" style="left:2702px;top:1581px;width:51px;height:47.5px;background:#f4f4f5;border-radius:3px"></div><svg class="abs" style="left:2722px;top:1597px" width="9" height="16" viewBox="0 0 9 16"><path d="M1 1 L7.5 8 L1 15" stroke="#c0c4cc" stroke-width="1.6" fill="none"/></svg><div class="abs" style="left:2803px;top:1589px;font-size:21px;line-height:32px;color:#606266;white-space:nowrap"><span class="cj">前往</span></div><div class="inp" style="left:2855px;top:1582px;width:74.5px;height:47px;color:#606266;line-height:43px;padding:0;text-align:center;font-size:21px">1</div><div class="abs" style="left:2937px;top:1589px;font-size:21px;line-height:32px;color:#606266;white-space:nowrap"><span class="cj">页</span></div><div class="abs" style="left:0px;top:1570px;width:2982px;height:72px;z-index:5;background:linear-gradient(to bottom,rgba(0,0,0,0) 0%,rgba(0,0,0,.012) 35%,rgba(0,0,0,.04) 65%,rgba(0,0,0,.10) 100%);pointer-events:none"></div></div>
<div class="abs" style="left:318px;top:55px;width:2664px;height:7px;background:linear-gradient(to bottom,rgba(0,21,41,.10),rgba(0,21,41,0))"></div>
<div id="shadow"></div>
</body></html>
